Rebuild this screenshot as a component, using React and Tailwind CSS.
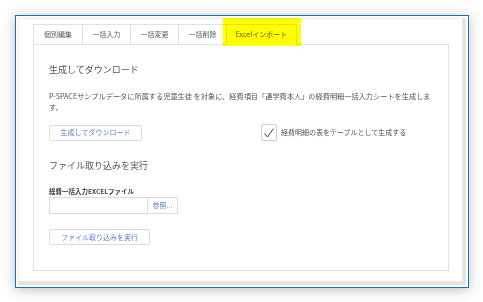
import React from "react";

const font = { fontFamily: '"Noto Sans CJK JP", "Noto Sans", sans-serif' };

function Tab({ w, children, active }) {
  return (
    <div
      className={`-mr-px flex items-center justify-center border border-b-0 border-[#e2e2e2] bg-white text-[7px] text-[#5a5a5a] ${w} ${active ? "-mb-px h-[21px] pb-px" : "h-[20px]"}`}
    >
      {children}
    </div>
  );
}

export default function App() {
  return (
    <div className="relative h-[302px] w-[483px] overflow-hidden bg-white" style={font}>
      <div className="ml-[15px] mt-[15px] h-[273px] w-[454px] border border-[#1471c0] bg-white p-[2px] shadow-[0_2px_12px_rgba(0,0,0,0.25)]">
        <div className="h-full border-l border-t border-l-[#ececec] border-t-[#ececec] border-r-4 border-b-4 border-r-[#e3e3e3] border-b-[#e3e3e3] pl-[14px] pt-[5px]">
          <div className="relative z-10 flex h-[20px] items-start">
            <Tab w="w-[50px]">個別編集</Tab>
            <Tab w="w-[49px]">一括入力</Tab>
            <Tab w="w-[49px]">一括変更</Tab>
            <Tab w="w-[49px]">一括削除</Tab>
            <Tab w="w-[71px]" active>Excelインポート</Tab>
          </div>
          <div className="h-[227px] w-[416px] border border-[#e2e2e2] bg-white px-[15px] pt-[19px]">
            <div className="text-[9px] leading-[12px] text-[#555]">生成してダウンロード</div>
            <div className="mt-[15px] text-[7.2px] leading-[10.5px] text-[#555]">
              <div className="whitespace-nowrap">
                P-SPACEサンプルデータに所属する児童生徒 を対象に、経費項目「通学費本人」の経費明細一括入力シートを生成しま
              </div>
              <div>す。</div>
            </div>
            <div className="mt-[12px] flex h-[17px] items-center">
              <button className="flex h-[16px] w-[93px] items-center justify-center rounded-[2px] border border-[#dcdcdc] bg-white text-[7px] text-[#5c7fd0]">
                生成してダウンロード
              </button>
              <div className="ml-[119px] flex items-center">
                <div className="flex h-[17px] w-[16px] items-center justify-center rounded-[2px] border border-[#cfcfcf] bg-white">
                  <svg width="12" height="12" viewBox="0 0 12 12">
                    <polyline points="1.5,6.5 4.5,10 10.5,1.5" fill="none" stroke="#444" strokeWidth="1" />
                  </svg>
                </div>
                <span className="ml-[4px] text-[7px] text-[#555]">経費明細の表をテーブルとして生成する</span>
              </div>
            </div>
            <div className="mt-[19px] text-[9px] leading-[12px] text-[#555]">ファイル取り込みを実行</div>
            <div className="mt-[15px] text-[6.5px] font-bold leading-[9px] text-[#444]">経費一括入力EXCELファイル</div>
            <div className="mt-[1px] flex h-[17px] w-[129px] border border-[#dcdcdc] bg-white">
              <div className="flex-1" />
              <div className="flex w-[30px] items-center justify-center border-l border-[#dcdcdc] text-[7px] text-[#5c7fd0]">
                参照...
              </div>
            </div>
            <button className="mt-[15px] flex h-[16px] w-[101px] items-center justify-center rounded-[2px] border border-[#dcdcdc] bg-white text-[7px] text-[#5c7fd0]">
              ファイル取り込みを実行
            </button>
          </div>
        </div>
      </div>
      <div className="absolute left-[223px] top-[18px] z-20 h-[28px] w-[78px] bg-[#ffff00] mix-blend-multiply" />
    </div>
  );
}
